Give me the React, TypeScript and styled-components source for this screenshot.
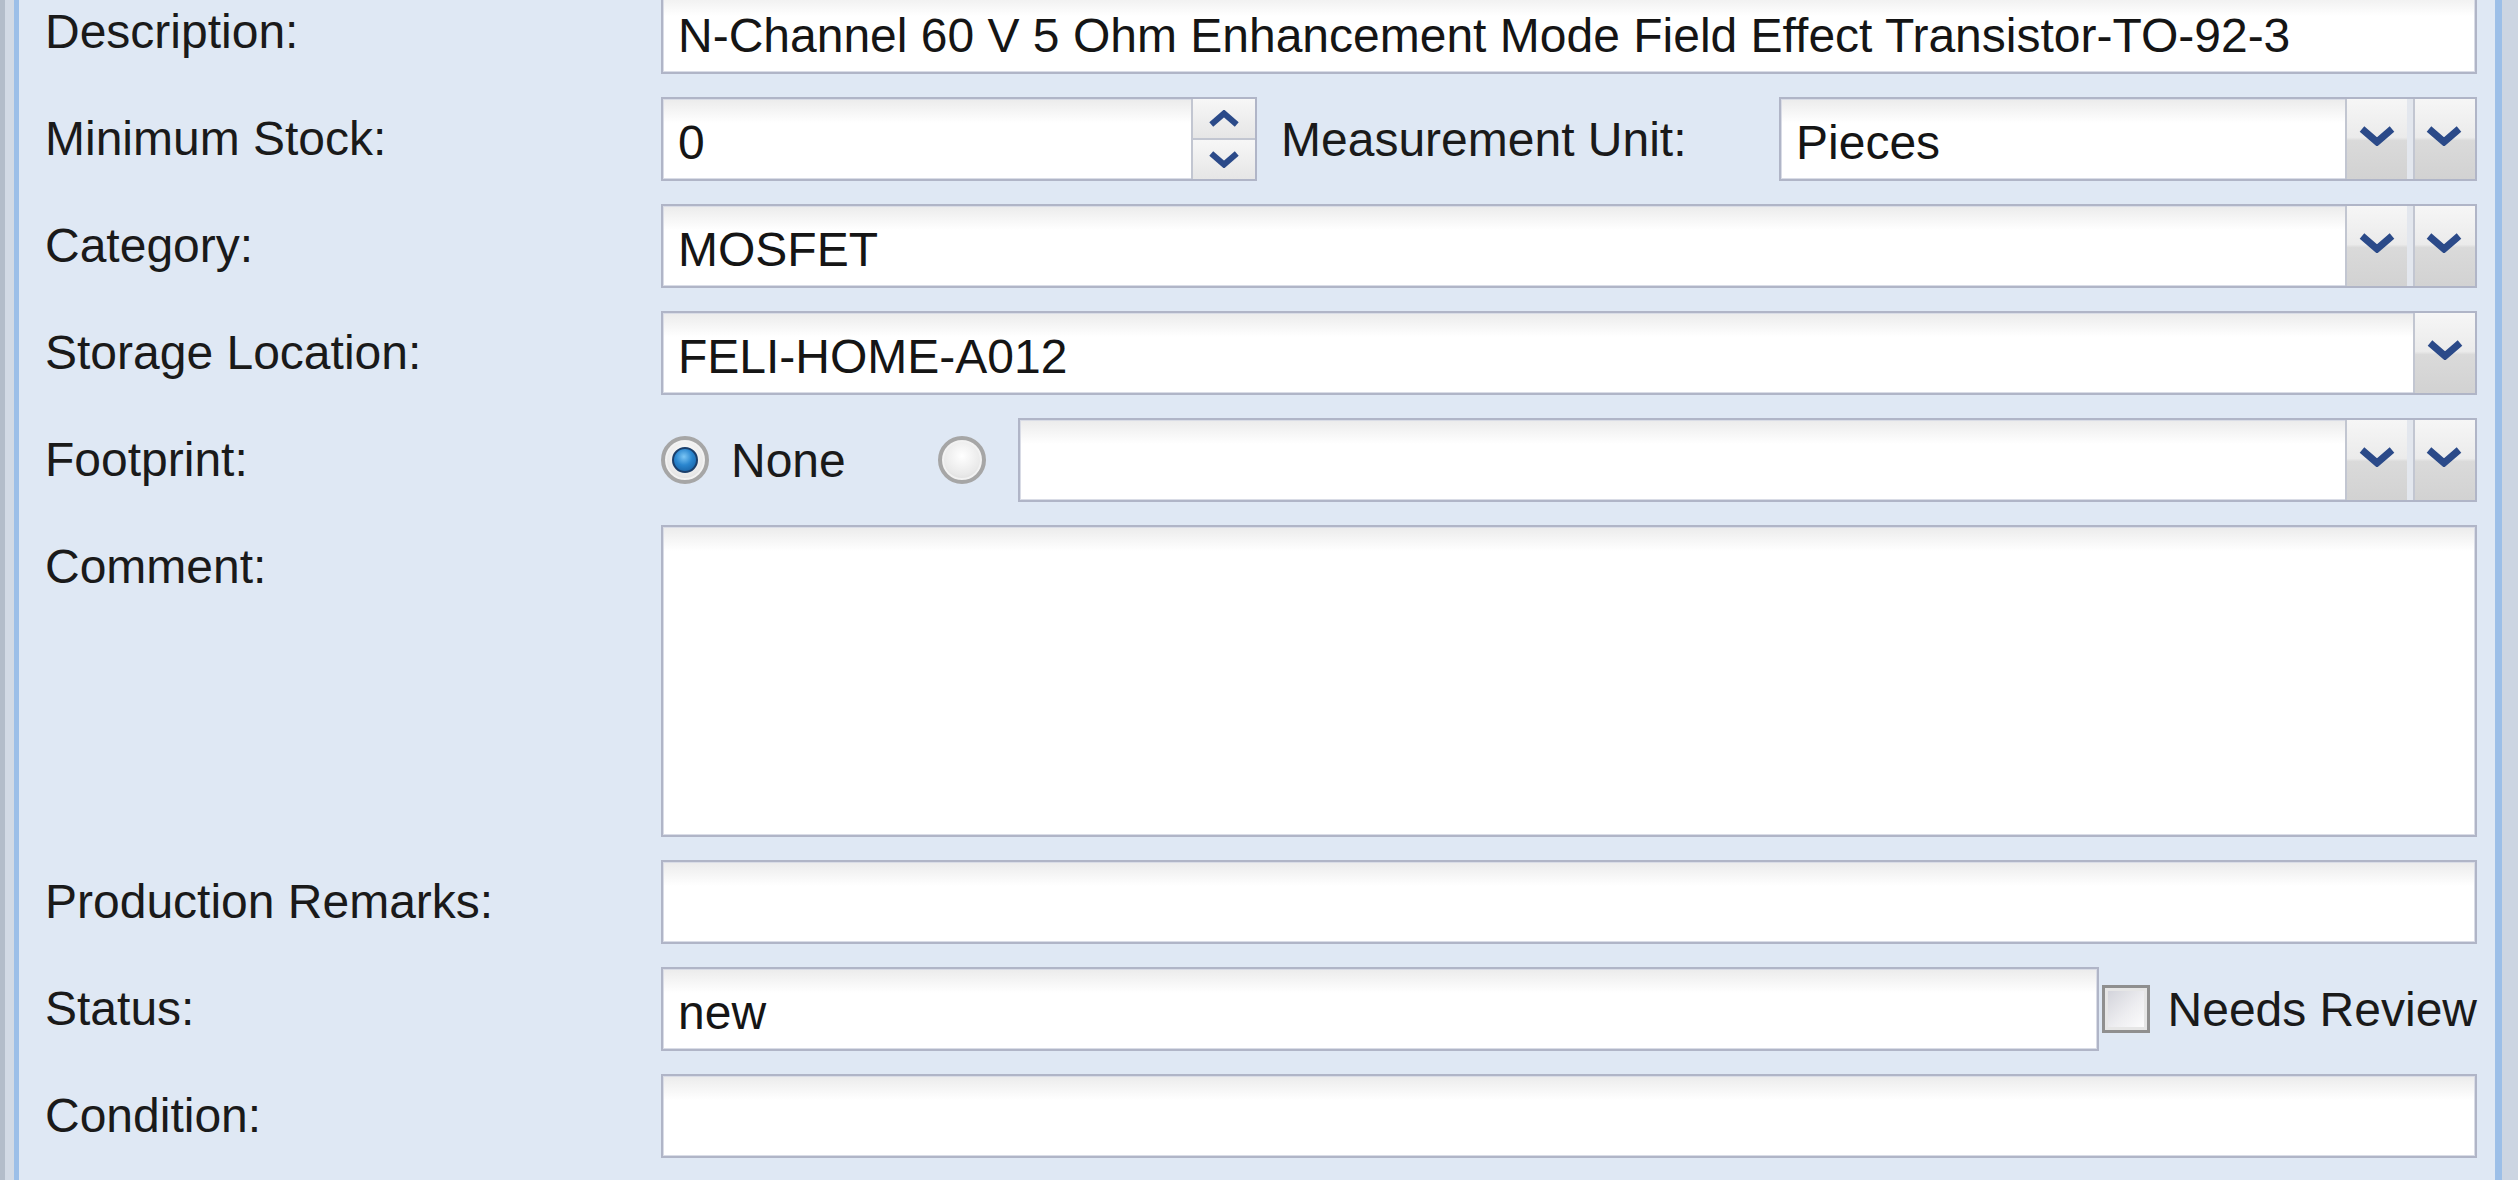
import React from "react";
import styled, { createGlobalStyle } from "styled-components";

const GlobalStyle = createGlobalStyle`
  html, body {
    margin: 0;
    padding: 0;
    background: #dfe8f4;
    overflow: hidden;
  }
  body {
    font-family: "Liberation Sans", Arial, sans-serif;
    color: #161616;
  }
`;

const Frame = styled.div`
  display: flex;
  width: 2518px;
  height: 1180px;
  overflow: hidden;
  background: #dfe8f4;
`;

const LeftEdge = styled.div`
  flex: none;
  width: 20px;
  background: linear-gradient(
    to right,
    #b3bdca 0 5px,
    #d2dae5 5px 14px,
    #9cbfe8 14px 19px,
    #dfe8f4 19px
  );
`;

const RightEdge = styled.div`
  flex: none;
  width: 23px;
  background: linear-gradient(to right, #9cbfe8 0 7px, #ccd5e2 7px);
`;

const Form = styled.div`
  flex: 1;
  display: grid;
  grid-template-columns: 616px 1fr;
  row-gap: 23px;
  align-content: start;
  padding: 0 18px 0 25px;
  margin-top: -10px;
`;

const Label = styled.div`
  height: 84px;
  line-height: 84px;
  font-size: 48px;
  white-space: nowrap;
  color: #1a1a1a;
`;

const Row = styled.div`
  display: flex;
  align-items: center;
  min-width: 0;
`;

const Box = styled.div<{ $h?: number; $w?: number }>`
  box-sizing: border-box;
  height: ${(p) => p.$h ?? 84}px;
  ${(p) => (p.$w ? `width: ${p.$w}px; flex: none;` : `flex: 1;`)}
  min-width: 0;
  border: 2px solid #b0b5c7;
  box-shadow: inset 0 0 0 1px #d9dce6;
  background: linear-gradient(#ebebeb 0px, #ffffff 24px);
  display: flex;
  align-items: stretch;
  overflow: hidden;
`;

const Value = styled.div`
  flex: 1;
  min-width: 0;
  padding: 4px 0 0 15px;
  font-size: 48px;
  line-height: 80px;
  white-space: nowrap;
  overflow: hidden;
  color: #151515;
`;

const ArrowButton = styled.div`
  flex: none;
  width: 62px;
  box-sizing: border-box;
  border-left: 2px solid #c2c6d1;
  background: linear-gradient(
    #f6f6f6 0%,
    #ebebeb 48%,
    #dadada 52%,
    #d2d2d2 100%
  );
  display: flex;
  align-items: center;
  justify-content: center;
  padding-bottom: 6px;
  & + & {
    width: 68px;
    border-left: 6px solid #e3e7ee;
    box-shadow: inset 2px 0 0 #c2c6d1;
  }
`;

const SpinColumn = styled.div`
  flex: none;
  width: 62px;
  display: flex;
  flex-direction: column;
  border-left: 2px solid #c2c6d1;
`;

const SpinHalf = styled.div`
  flex: 1;
  display: flex;
  align-items: center;
  justify-content: center;
  background: linear-gradient(#f7f7f7, #e6e6e6);
  & + & {
    border-top: 2px solid #c2c6d1;
  }
`;

const InlineLabel = styled.div<{ $w?: number }>`
  flex: none;
  ${(p) => (p.$w ? `width: ${p.$w}px;` : "")}
  font-size: 48px;
  white-space: nowrap;
  color: #1a1a1a;
`;

const RadioOption = styled.div<{ $w?: number }>`
  flex: none;
  display: flex;
  align-items: center;
  gap: 22px;
  ${(p) => (p.$w ? `width: ${p.$w}px;` : "")}
`;

const Radio = styled.div<{ $on?: boolean }>`
  flex: none;
  box-sizing: border-box;
  width: 48px;
  height: 48px;
  border-radius: 50%;
  border: 4px solid #a6a6a6;
  background: radial-gradient(circle at 50% 40%, #ffffff 0%, #e9e9e9 60%, #cfcfcf 100%);
  box-shadow: inset 0 0 0 2px #f2f2f2;
  display: flex;
  align-items: center;
  justify-content: center;
  &::after {
    content: "";
    display: ${(p) => (p.$on ? "block" : "none")};
    width: 22px;
    height: 22px;
    border-radius: 50%;
    border: 2px solid #1b3f6b;
    background: radial-gradient(circle at 45% 35%, #7cc6f5 0%, #2a86cf 45%, #125596 100%);
  }
`;

const Checkbox = styled.div`
  flex: none;
  box-sizing: border-box;
  width: 48px;
  height: 48px;
  margin-left: 3px;
  border: 3px solid #8f8f8f;
  box-shadow: inset 0 0 0 3px #e6e6e6;
  background: linear-gradient(135deg, #cfd0d8 0%, #ededf0 55%, #ffffff 100%);
`;

const Chevron = ({ up = false, w = 36, h = 20 }: { up?: boolean; w?: number; h?: number }) => (
  <svg width={w} height={h} viewBox="0 0 36 20">
    <path
      d={up ? "M3 17 L18 4 L33 17" : "M3 3 L18 16 L33 3"}
      fill="none"
      stroke="#2b4a89"
      strokeWidth="7"
      strokeLinejoin="miter"
    />
  </svg>
);

const Combo = ({ value, buttons = 2, w }: { value?: string; buttons?: number; w?: number }) => (
  <Box $w={w}>
    <Value>{value}</Value>
    {Array.from({ length: buttons }).map((_, i) => (
      <ArrowButton key={i}>
        <Chevron />
      </ArrowButton>
    ))}
  </Box>
);

export default function App() {
  return (
    <>
      <GlobalStyle />
      <Frame>
        <LeftEdge />
        <Form>
          <Label>Description:</Label>
          <Row>
            <Box>
              <Value>N-Channel 60 V 5 Ohm Enhancement Mode Field Effect Transistor-TO-92-3</Value>
            </Box>
          </Row>

          <Label>Minimum Stock:</Label>
          <Row>
            <Box $w={596}>
              <Value>0</Value>
              <SpinColumn>
                <SpinHalf>
                  <Chevron up w={34} h={17} />
                </SpinHalf>
                <SpinHalf>
                  <Chevron w={34} h={17} />
                </SpinHalf>
              </SpinColumn>
            </Box>
            <InlineLabel $w={498} style={{ marginLeft: 24 }}>
              Measurement Unit:
            </InlineLabel>
            <Combo value="Pieces" />
          </Row>

          <Label>Category:</Label>
          <Row>
            <Combo value="MOSFET" />
          </Row>

          <Label>Storage Location:</Label>
          <Row>
            <Combo value="FELI-HOME-A012" buttons={1} />
          </Row>

          <Label>Footprint:</Label>
          <Row>
            <RadioOption $w={277}>
              <Radio $on />
              <InlineLabel>None</InlineLabel>
            </RadioOption>
            <RadioOption $w={80}>
              <Radio />
            </RadioOption>
            <Combo />
          </Row>

          <Label>Comment:</Label>
          <Row>
            <Box $h={312} />
          </Row>

          <Label>Production Remarks:</Label>
          <Row>
            <Box />
          </Row>

          <Label>Status:</Label>
          <Row>
            <Box>
              <Value>new</Value>
            </Box>
            <Checkbox />
            <InlineLabel style={{ marginLeft: 18 }}>Needs Review</InlineLabel>
          </Row>

          <Label>Condition:</Label>
          <Row>
            <Box />
          </Row>
        </Form>
        <RightEdge />
      </Frame>
    </>
  );
}
